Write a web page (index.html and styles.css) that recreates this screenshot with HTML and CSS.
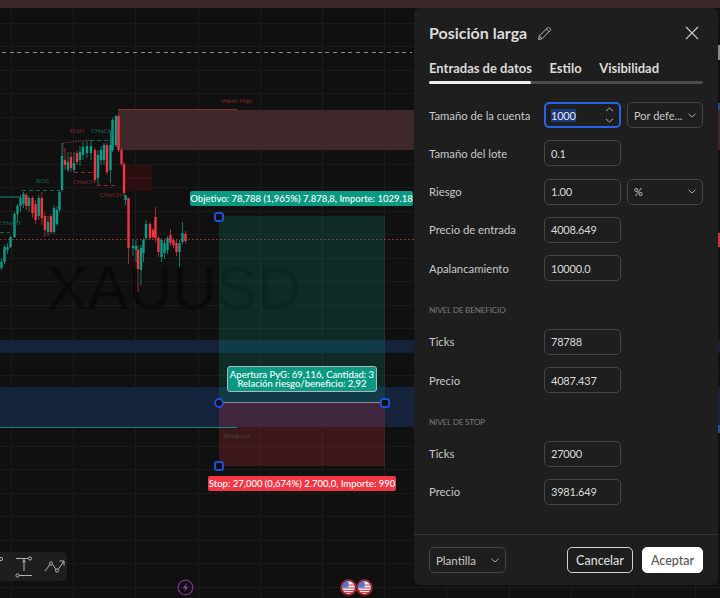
FILE: index.html
```html
<!DOCTYPE html>
<html lang="es">
<head>
<meta charset="utf-8">
<title>Posición larga</title>
<link rel="stylesheet" href="styles.css">
</head>
<body>
<main class="chart">
  <div class="grid"></div>
  <div class="top-band"></div>
  <div class="dash-line"></div>
  <div class="zone zone-red"></div>
  <div class="zone zone-blue-a"></div>
  <div class="zone zone-blue-b"></div>
  <div class="watermark">XAUUSD</div>
  <div class="price-line"></div>
  <div class="zone pos-green"></div>
  <div class="zone pos-red"></div>

  <svg class="candles" width="720" height="598" viewBox="0 0 720 598">
    <rect class="ob" x="124" y="165" width="28" height="26"/>
    <path class="ob-line" d="M124 178.5H152"/>
    <path class="line-red" d="M118 109.5H237"/>
    <path class="line-green" d="M0 427.5H237M0 197H21"/>
    <path class="dash-green" d="M22 190.5H60M90 140.5H110M0 232.5H10"/>
    <path class="dash-red" d="M74 172.5H95M97 185.5H118"/>
    <path class="dot-red" d="M63 143L90 140M63 143V157"/>
    <path class="wick-g" d="M1.5 258V270M4.5 245V264M7.5 243V254M10.5 236V248M14.5 212V238M17.5 204V222M20.5 195V212M23.5 192V208M29 196V212M38.7 195V220M48 216V236M54 205V234M57 206V226M59.5 190V212M62 143V192M68 152V172M74 152V172M80 146V166M83 142V160M87 141V158M91 140V160M98 150V185M101 146V165M104 143V165M110.500 130V183M112.500 118V152M116 115V147M125.500 195V205M133 240V256M136 240V262M141 245V285M143.500 238V262M146 220V240M161.500 238V262M164.500 240V259M167.500 236V254M179.500 240V267M182.500 222V244"/>
    <path class="wick-r" d="M26.300 193V210M32.500 196V218M35.600 200V224M41.800 192V225M44.900 212V237M51 214V234M65 148V170M71 152V172M77 150V165M95 148V182M107 143V175M118.500 114V152M121.500 148V166M124 162V196M128.500 198V264M138 245V292M150 222V240M153 228V240M155.500 207V242M158.500 236V257M170.500 229V246M173.500 238V248M176.500 240V256M185.500 231V243"/>
    <path class="body-g" d="M1.500 262V268M4.500 247V262M7.500 247V250M10.500 237V247M14.500 214V237M17.500 206V214M20.500 198V206M23.500 194V204M29 198V206M38.700 198V216M48 222V232M54 208V232M57 210V224M59.500 192V210M62 156V190M68 162V170M74 163V170M80 152V160M83 147V155M87 146V153M91 146V153M98 155V178M101 150V160M104 145V160M110.500 145V170M112.500 120V150M116 116V145M125.500 195V200M133 246V248M136 246V250M141 248V270M143.500 240V253M146 224V238M161.500 240V257M164.500 243V253M167.500 238V250M179.500 243V252M182.500 233V242"/>
    <path class="body-r" d="M26.300 195V206M32.500 198V213M35.600 204V220M41.800 198V218M44.900 216V230M51 216V232M65 160V165M71 157V168M77 153V162M95 150V180M107 145V172M118.500 116V150M121.500 150V164M124 164V193M128.500 198V248M138 250V269M150 224V238M153 230V237M155.500 217V238M158.500 238V252M170.500 235V243M173.500 240V245M176.500 243V252M185.500 234V241"/>
    <text class="tag tag-r" x="237" y="102.500">Weak High</text>
    <text class="tag tag-r" x="77" y="133">EQH</text>
    <text class="tag tag-g" x="102" y="133">CHoCH</text>
    <text class="tag tag-g" x="42.500" y="183">BOS</text>
    <text class="tag tag-r" x="84" y="184">CHoCH</text>
    <text class="tag tag-r" x="110.500" y="197">CHoCH</text>
    <text class="tag tag-g" x="10" y="225">CHoCH</text>
    <text class="tag tag-low" x="237" y="438">Strong Low</text>
    <path class="entry" d="M219 402.500H385"/>
  </svg>

  <div class="handle handle-tp"></div>
  <div class="handle handle-sl"></div>
  <div class="handle handle-right"></div>
  <div class="handle handle-entry"></div>

  <div class="label label-target">Objetivo: 78,788 (1,965%) 7.878,8, Importe: 1029.18</div>
  <div class="label label-open">Apertura PyG: 69,116, Cantidad: 3<br>Relación riesgo/beneficio: 2,92</div>
  <div class="label label-stop">Stop: 27,000 (0,674%) 2.700,0, Importe: 990</div>

  <div class="toolbar">
    <svg class="tool-icon" width="4" height="24" viewBox="0 0 4 24"><circle class="ic" cx="1" cy="4" r="1.600"/></svg>
    <svg class="tool-icon" width="18" height="22" viewBox="0 0 18 22"><path class="ic" d="M1 2.500H13.500M9 3V15M9 4L7.500 6.500M9 4L10.500 6.500M4 19.500H17"/><circle class="ic" cx="15" cy="2.500" r="1.600"/><circle class="ic" cx="2.500" cy="19.500" r="1.600"/></svg>
    <svg class="tool-icon" width="21" height="16" viewBox="0 0 21 16"><path class="ic" d="M1 12L6 5.500M8.500 5.500L12 10.500M14.500 10L20 2M15.500 2H20V6.500"/><circle class="ic" cx="7" cy="4.500" r="1.600"/><circle class="ic" cx="13" cy="11.500" r="1.600"/></svg>
  </div>

  <svg class="event event-bolt" width="17" height="17" viewBox="0 0 17 17"><circle class="bolt-ring" cx="8.500" cy="8.500" r="7.300"/><path class="bolt" d="M10 4L5.500 9.200H8.200L7 13L11.500 7.800H8.800Z"/></svg>
  <svg class="event event-flag-a" width="17" height="17" viewBox="0 0 17 17"><use href="#flag"/></svg>
  <svg class="event event-flag-b" width="17" height="17" viewBox="0 0 17 17"><use href="#flag"/></svg>
  <svg class="defs" width="0" height="0"><defs>
    <g id="flag">
      <circle class="flag-white" cx="8.500" cy="8.500" r="6.500"/>
      <path class="flag-stripe" d="M2.500 6H14.500M2 9H15M2.500 11.500H14.500M4.500 13.700H12.500"/>
      <path class="flag-blue" d="M8.500 2A6.500 6.500 0 0 0 2 8.500H8.500Z"/>
      <circle class="flag-ring" cx="8.500" cy="8.500" r="7.500"/>
    </g>
  </defs></svg>

  <div class="edge-mark edge-grey"></div>
  <div class="edge-mark edge-blue"></div>
  <div class="edge-mark edge-red"></div>
  <div class="edge-mark edge-blue-low"></div>

  <section class="dialog">
    <header class="head">
      <h1 class="title">Posición larga</h1>
      <svg class="pencil" width="15" height="15" viewBox="0 0 15 15"><path d="M1.500 13.500L2.300 10L10.500 1.800C11 1.300 11.800 1.300 12.300 1.800L13.200 2.700C13.700 3.200 13.700 4 13.200 4.500L5 12.700ZM9.300 3L12 5.700M2.300 10L5 12.700"/></svg>
      <svg class="close" width="14" height="14" viewBox="0 0 14 14"><path d="M1 1L13 13M13 1L1 13"/></svg>
    </header>
    <nav class="tabs">
      <span class="tab">Entradas de datos</span>
      <span class="tab">Estilo</span>
      <span class="tab">Visibilidad</span>
    </nav>
    <div class="tabline"><div class="tabline-on"></div></div>

    <div class="form">
      <div class="row">
        <span class="row-label">Tamaño de la cuenta</span>
        <div class="field field-focus"><span class="selected">1000</span>
          <svg class="spin" width="9" height="16" viewBox="0 0 9 16"><path d="M1 4L4.500 1L8 4M1 12L4.500 15L8 12"/></svg>
        </div>
        <div class="select"><span>Por defe...</span><svg class="chev" width="8" height="5" viewBox="0 0 8 5"><path d="M.5 .8L4 4L7.500 .8"/></svg></div>
      </div>
      <div class="row">
        <span class="row-label">Tamaño del lote</span>
        <div class="field">0.1</div>
      </div>
      <div class="row">
        <span class="row-label">Riesgo</span>
        <div class="field">1.00</div>
        <div class="select"><span>%</span><svg class="chev" width="8" height="5" viewBox="0 0 8 5"><path d="M.5 .8L4 4L7.500 .8"/></svg></div>
      </div>
      <div class="row">
        <span class="row-label">Precio de entrada</span>
        <div class="field">4008.649</div>
      </div>
      <div class="row">
        <span class="row-label">Apalancamiento</span>
        <div class="field">10000.0</div>
      </div>

      <h2 class="section">NIVEL DE BENEFICIO</h2>
      <div class="row">
        <span class="row-label">Ticks</span>
        <div class="field">78788</div>
      </div>
      <div class="row">
        <span class="row-label">Precio</span>
        <div class="field">4087.437</div>
      </div>

      <h2 class="section">NIVEL DE STOP</h2>
      <div class="row">
        <span class="row-label">Ticks</span>
        <div class="field">27000</div>
      </div>
      <div class="row">
        <span class="row-label">Precio</span>
        <div class="field">3981.649</div>
      </div>
    </div>

    <footer class="foot">
      <div class="select select-tpl"><span>Plantilla</span><svg class="chev" width="8" height="5" viewBox="0 0 8 5"><path d="M.5 .8L4 4L7.500 .8"/></svg></div>
      <div class="actions">
        <button class="btn btn-cancel">Cancelar</button>
        <button class="btn btn-ok">Aceptar</button>
      </div>
    </footer>
  </section>
</main>
</body>
</html>
```
FILE: styles.css
```css
* { box-sizing: border-box; }
html, body { margin: 0; padding: 0; }
body { background: #0f0f0f; font-family: Lato, "Liberation Sans", sans-serif; }

.chart { position: relative; width: 720px; height: 598px; overflow: hidden; background: #101010; }

.grid {
  position: absolute; inset: 0;
  background-image:
    repeating-linear-gradient(90deg, transparent 0 11px, #1c1c1c 11px 12px, transparent 12px 62.2px),
    repeating-linear-gradient(180deg, transparent 0 22.8px, #1a1a1a 22.8px 23.5px);
  background-size: 100% 100%;
}
.top-band { position: absolute; left: 0; right: 0; top: 0; height: 7.500px; background: #3a2527; }
.dash-line {
  position: absolute; left: 2px; width: 410px; top: 52px; height: 1px;
  background: repeating-linear-gradient(90deg, #8c8c8c 0 4px, transparent 4px 7.700px);
}
.zone { position: absolute; }
.zone-red { left: 118px; right: 0; top: 109.500px; height: 40.500px; background: #3e2829; }
.zone-blue-a { left: 0; right: 0; top: 340px; height: 13px; background: #14233b; }
.zone-blue-b { left: 0; right: 0; top: 387px; height: 40px; background: #15233c; }
.watermark {
  position: absolute; left: 47px; top: 253px;
  font: 61px/70px "Liberation Sans", sans-serif; color: rgba(0, 0, 0, .38);
}
.price-line {
  position: absolute; left: 0; right: 0; top: 239px; height: 1px;
  background: repeating-linear-gradient(90deg, #8a2a31 0 2px, transparent 2px 4px);
}
.pos-green { left: 219px; top: 216px; width: 166px; height: 186px; background: rgba(8, 153, 129, .2); }
.pos-red { left: 219px; top: 402px; width: 166px; height: 64px; background: rgba(242, 54, 69, .2); }

.candles { position: absolute; left: 0; top: 0; }
.ob { fill: #2a0e10; }
.ob-line { stroke: #4a1216; fill: none; }
.line-red { stroke: #8a3236; fill: none; }
.line-green { stroke: #128a78; fill: none; }
.dash-green { stroke: #0f6a5c; fill: none; stroke-dasharray: 4 3; }
.dash-red { stroke: #93262e; fill: none; stroke-dasharray: 4 3; }
.dot-red { stroke: #8a2a30; fill: none; stroke-dasharray: 1.500 1; }
.wick-g { stroke: #0b7a69; fill: none; }
.wick-r { stroke: #a32832; fill: none; }
.body-g { stroke: #0c9c85; stroke-width: 2.400; fill: none; }
.body-r { stroke: #f23645; stroke-width: 2.400; fill: none; }
.tag { font: 6.500px Lato, sans-serif; text-anchor: middle; }
.tag-r { fill: #7f252b; }
.tag-g { fill: #0c6558; }
.tag-low { fill: #3a4a45; font-size: 5.500px; }
.entry { stroke: #8d8d8d; fill: none; }

.handle { position: absolute; width: 10px; height: 10px; border: 2px solid #1c50d8; border-radius: 3px; background: #101010; }
.handle-tp { left: 214px; top: 212px; }
.handle-sl { left: 214px; top: 461px; }
.handle-right { left: 380px; top: 398px; }
.handle-entry { left: 214px; top: 398px; border-radius: 50%; }

.label {
  position: absolute; color: #fff; font-size: 9.500px; line-height: 11px; font-weight: 500;
  text-align: center; white-space: nowrap; border-radius: 2px;
  display: flex; align-items: center; justify-content: center;
}
.label-target { left: 190px; top: 191px; width: 223px; height: 15px; background: #089981; }
.label-open { left: 227px; top: 366px; width: 150px; height: 26px; background: #089981; border: 1px solid #b2b5be; border-radius: 3px; line-height: 9.500px; }
.label-stop { left: 208px; top: 476px; width: 188px; height: 15px; background: #f23645; }

.toolbar {
  position: absolute; left: 0; top: 552px; width: 67px; height: 29px;
  display: flex; align-items: center; gap: 11px; padding-right: 4px;
  background: #1e1e1e; border-radius: 0 5px 5px 0;
}
.tool-icon { display: block; flex: none; }
.ic { fill: none; stroke: #b4b4b4; stroke-width: 1; }

.event { position: absolute; top: 579px; }
.event-bolt { left: 177px; }
.event-flag-a { left: 339.500px; }
.event-flag-b { left: 355.500px; }
.defs { position: absolute; }
.bolt-ring { fill: none; stroke: #7b2d8e; stroke-width: 1.300; }
.bolt { fill: #8e3aa5; }
.flag-white { fill: #e8e8ee; }
.flag-stripe { stroke: #d8464f; stroke-width: 1.200; fill: none; }
.flag-blue { fill: #4a78d6; }
.flag-ring { fill: none; stroke: #a52530; stroke-width: 1.500; }

.edge-mark { position: absolute; left: 718px; width: 2px; }
.edge-grey { top: 45px; height: 15px; background: #8c8c8c; }
.edge-blue { top: 103px; height: 7px; background: #2a4a90; }
.edge-red { top: 233px; height: 14px; background: #d0303f; }
.edge-blue-low { top: 425px; height: 8px; background: #2a4a90; }

.dialog {
  position: absolute; left: 414px; top: 8px; width: 304px; height: 577px;
  display: flex; flex-direction: column;
  background: #1e1e1e; border-radius: 6px; color: #dbdbdb;
}
.head { display: flex; align-items: center; padding: 16px 19px 0 15px; height: 34px; }
.title { margin: 0; font-size: 16px; line-height: 18px; font-weight: 700; color: #dbdbdb; }
.pencil { margin-left: 10px; }
.pencil path { fill: none; stroke: #b8b8b8; stroke-width: 1; }
.close { margin-left: auto; }
.close path { fill: none; stroke: #c8c8c8; stroke-width: 1.200; }
.tabs { display: flex; gap: 17.500px; padding: 17px 0 0 15px; height: 37px; }
.tab { font-size: 13px; line-height: 18px; font-weight: 700; color: #dbdbdb; }
.tabline { margin: 2px 15px 0; height: 3px; background: #4a4a4a; border-radius: 2px; }
.tabline-on { width: 102px; height: 3px; background: #f0f0f0; border-radius: 2px; }

.form { padding: 18px 15px 0; display: flex; flex-direction: column; gap: 12.300px; flex: 1; }
.row { display: flex; align-items: center; height: 26px; }
.row-label { width: 115px; flex: none; font-size: 11.300px; color: #c8c8c8; }
.field {
  flex: none; width: 77px; height: 26px; padding: 0 6px;
  display: flex; align-items: center; justify-content: space-between;
  border: 1px solid #454545; border-radius: 5px; font-size: 11px; letter-spacing: -.2px; color: #dbdbdb;
}
.field-focus { border: 2px solid #2962e8; padding: 0 5px; }
.selected { background: #1c3a80; color: #e8e8e8; }
.spin { display: block; }
.spin path { fill: none; stroke: #b0b0b0; stroke-width: 1; }
.select {
  flex: none; width: 76px; height: 26px; margin-left: 6px; padding: 0 6px;
  display: flex; align-items: center; justify-content: space-between; white-space: nowrap;
  border: 1px solid #454545; border-radius: 5px; font-size: 11px; color: #c8c8c8;
}
.chev path { fill: none; stroke: #a8a8a8; stroke-width: 1; }
.section { margin: 10px 0 -1px; height: 14px; font-size: 8.200px; letter-spacing: -.2px; line-height: 14px; font-weight: 400; color: #7a7a7a; }

.foot {
  height: 51px; padding: 0 15px;
  display: flex; align-items: center; justify-content: space-between;
  border-top: 1px solid #353535;
}
.select-tpl { margin-left: 0; width: 77px; font-size: 11.500px; }
.actions { display: flex; gap: 9px; }
.btn {
  height: 26px; border-radius: 5px; font-family: inherit; font-size: 12.500px; padding: 0;
  font-weight: 500;
}
.btn-cancel { width: 66px; background: transparent; border: 1px solid #d0d0d0; color: #dbdbdb; }
.btn-ok { width: 61px; background: #fff; border: 1px solid #fff; color: #555; }
```
